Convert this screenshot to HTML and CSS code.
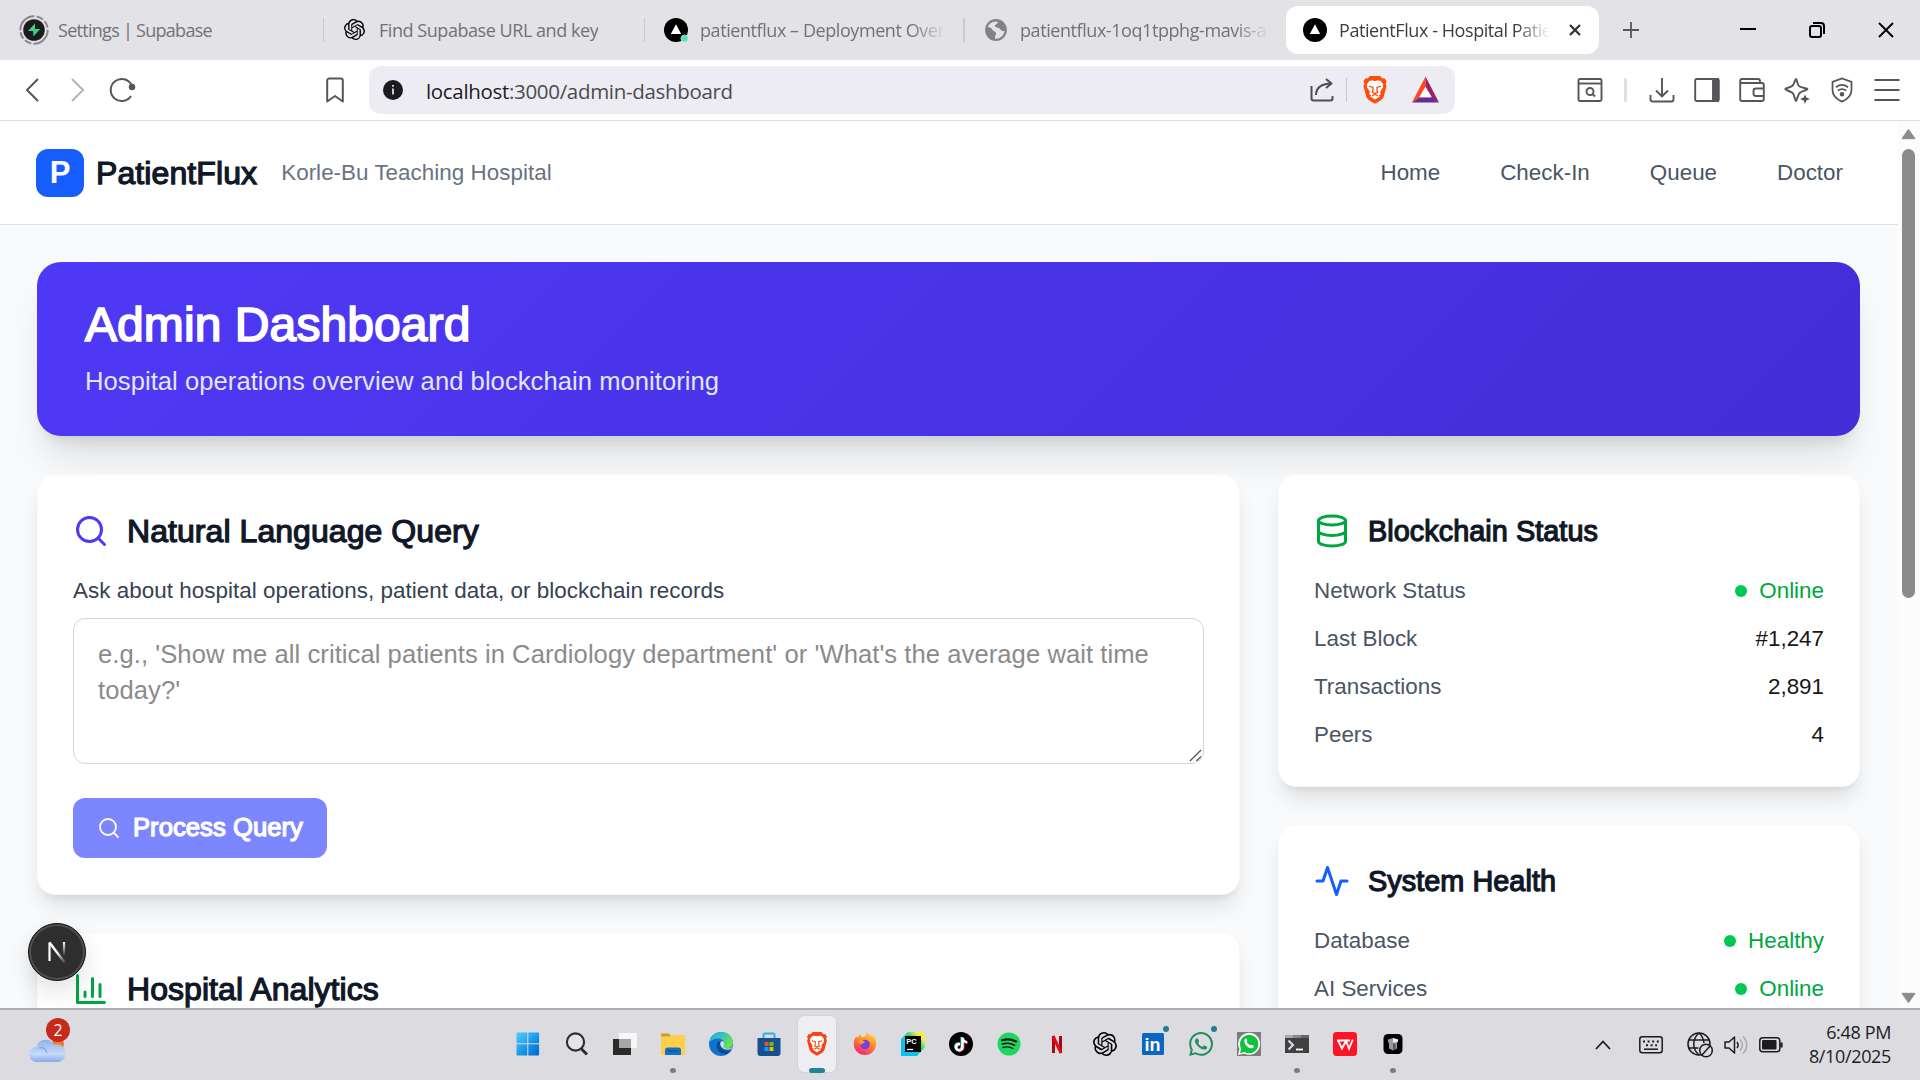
FILE: index.html
```html
<!DOCTYPE html>
<html lang="en">
<head>
<meta charset="utf-8">
<title>PatientFlux - Hospital Patient Management</title>
<link rel="stylesheet" href="styles.css">
</head>
<body>
<svg class="defs" width="0" height="0" aria-hidden="true">
  <defs>
    <symbol id="openai" viewBox="0 0 24 24"><path d="M22.2819 9.8211a5.9847 5.9847 0 0 0-.5157-4.9108 6.0462 6.0462 0 0 0-6.5098-2.9A6.0651 6.0651 0 0 0 4.9807 4.1818a5.9847 5.9847 0 0 0-3.9977 2.9 6.0462 6.0462 0 0 0 .7427 7.0966 5.98 5.98 0 0 0 .511 4.9107 6.051 6.051 0 0 0 6.5146 2.9001A5.9847 5.9847 0 0 0 13.2599 24a6.0557 6.0557 0 0 0 5.7718-4.2058 5.9894 5.9894 0 0 0 3.9977-2.9001 6.0557 6.0557 0 0 0-.7475-7.0729zm-9.022 12.6081a4.4755 4.4755 0 0 1-2.8764-1.0408l.1419-.0804 4.7783-2.7582a.7948.7948 0 0 0 .3927-.6813v-6.7369l2.02 1.1686a.071.071 0 0 1 .038.052v5.5826a4.504 4.504 0 0 1-4.4945 4.4944zm-9.6607-4.1254a4.4708 4.4708 0 0 1-.5346-3.0137l.142.0852 4.783 2.7582a.7712.7712 0 0 0 .7806 0l5.8428-3.3685v2.3324a.0804.0804 0 0 1-.0332.0615L9.74 19.9502a4.4992 4.4992 0 0 1-6.1408-1.6464zM2.3408 7.8956a4.485 4.485 0 0 1 2.3655-1.9728V11.6a.7664.7664 0 0 0 .3879.6765l5.8144 3.3543-2.0201 1.1685a.0757.0757 0 0 1-.071 0l-4.8303-2.7865A4.504 4.504 0 0 1 2.3408 7.872zm16.5963 3.8558L13.1038 8.364 15.1192 7.2a.0757.0757 0 0 1 .071 0l4.8303 2.7913a4.4944 4.4944 0 0 1-.6765 8.1042v-5.6772a.79.79 0 0 0-.407-.667zm2.0107-3.0231l-.142-.0852-4.7735-2.7818a.7759.7759 0 0 0-.7854 0L9.409 9.2297V6.8974a.0662.0662 0 0 1 .0284-.0615l4.8303-2.7866a4.4992 4.4992 0 0 1 6.6802 4.66zM8.3065 12.863l-2.02-1.1638a.0804.0804 0 0 1-.038-.0567V6.0742a4.4992 4.4992 0 0 1 7.3757-3.4537l-.142.0805L8.704 5.459a.7948.7948 0 0 0-.3927.6813zm1.0976-2.3654l2.602-1.4998 2.6069 1.4998v2.9994l-2.5974 1.4997-2.6067-1.4997Z"/></symbol>
    <symbol id="whatsapp" viewBox="0 0 24 24"><path d="M17.472 14.382c-.297-.149-1.758-.867-2.03-.967-.273-.099-.471-.148-.67.15-.197.297-.767.966-.94 1.164-.173.199-.347.223-.644.075-.297-.15-1.255-.463-2.39-1.475-.883-.788-1.48-1.761-1.653-2.059-.173-.297-.018-.458.13-.606.134-.133.298-.347.446-.52.149-.174.198-.298.298-.497.099-.198.05-.371-.025-.52-.075-.149-.669-1.612-.916-2.207-.242-.579-.487-.5-.669-.51-.173-.008-.371-.01-.57-.01-.198 0-.52.074-.792.372-.272.297-1.04 1.016-1.04 2.479 0 1.462 1.065 2.875 1.213 3.074.149.198 2.096 3.2 5.077 4.487.709.306 1.262.489 1.694.625.712.227 1.36.195 1.871.118.571-.085 1.758-.719 2.006-1.413.248-.694.248-1.289.173-1.413-.074-.124-.272-.198-.57-.347m-5.421 7.403h-.004a9.87 9.87 0 01-5.031-1.378l-.361-.214-3.741.982.998-3.648-.235-.374a9.86 9.86 0 01-1.51-5.26c.001-5.45 4.436-9.884 9.888-9.884 2.64 0 5.122 1.03 6.988 2.898a9.825 9.825 0 012.893 6.994c-.003 5.45-4.437 9.884-9.885 9.884m8.413-18.297A11.815 11.815 0 0012.05 0C5.495 0 .16 5.335.157 11.892c0 2.096.547 4.142 1.588 5.945L.057 24l6.305-1.654a11.882 11.882 0 005.683 1.448h.005c6.554 0 11.89-5.335 11.893-11.893a11.821 11.821 0 00-3.48-8.413z"/></symbol>
    <symbol id="tiktok" viewBox="0 0 24 24"><path d="M12.525.02c1.31-.02 2.61-.01 3.91-.02.08 1.53.63 3.09 1.75 4.17 1.12 1.11 2.7 1.62 4.24 1.79v4.03c-1.44-.05-2.89-.35-4.2-.97-.57-.26-1.1-.59-1.62-.93-.01 2.92.01 5.84-.02 8.75-.08 1.4-.54 2.79-1.35 3.94-1.31 1.92-3.58 3.17-5.91 3.21-1.43.08-2.86-.31-4.08-1.03-2.02-1.19-3.44-3.37-3.65-5.71-.02-.5-.03-1-.01-1.49.18-1.9 1.12-3.72 2.58-4.96 1.66-1.44 3.98-2.13 6.15-1.72.02 1.48-.04 2.96-.04 4.44-.99-.32-2.15-.23-3.02.37-.63.41-1.11 1.04-1.36 1.75-.21.51-.15 1.07-.14 1.61.24 1.64 1.82 3.02 3.5 2.87 1.12-.01 2.19-.66 2.77-1.61.19-.33.4-.67.41-1.06.1-1.79.06-3.57.07-5.36.01-4.03-.01-8.05.02-12.07z"/></symbol>
    <symbol id="brave" viewBox="0 0 24 28">
      <path d="M7 0h10l2.600 2.600 2-.3 2 3.200-.9 2.500.8 2.600-3 11.800-2.400 2.800L12 29l-6.100-3.800-2.400-2.800-3-11.800.8-2.600-.9-2.500 2-3.200 2 .3z" transform="scale(1 .96)"/>
      <path fill="#fff" d="M12 5l2.500-.6 2.800.3 3 3.600-.6 1.200.6 1.600-3.200 4.700.7 2.200-2 1.400 1 1.200L12 23.500l-4.800-2.900 1-1.200-2-1.400.7-2.200-3.200-4.700.6-1.600-.6-1.200 3-3.600 2.800-.3z"/>
      <path fill="none" stroke="#fb4a14" stroke-width="1.300" d="M6 10.300l4 .9v3.300l-.8 1.700 2.800 1.400 2.800-1.400-.8-1.700v-3.300l4-.9M9 20l3-1.700 3 1.700"/>
    </symbol>
    <symbol id="vercel" viewBox="0 0 24 24"><circle cx="12" cy="12" r="12" fill="#000"/><path d="M12 6.200l5.200 9.800H6.800z" fill="#fff"/></symbol>
    <symbol id="search" viewBox="0 0 24 24"><circle cx="11" cy="11" r="8"/><path d="M21 21l-4.300-4.300"/></symbol>
  </defs>
</svg>

<div class="tabstrip">
  <div class="tab tab-1">
    <svg class="fav-supabase" viewBox="0 0 30 30"><circle cx="15" cy="15" r="13.700" fill="none" stroke="#88898c" stroke-width="2" stroke-dasharray="22 2.200 7 2.200 7 2.200"/><circle cx="15" cy="15" r="10.800" fill="#1c1c1c"/><path d="M16 8.500l-7 7.500h5.300v5.500l7-7.500H16z" fill="#3ecf8e"/></svg>
    <span class="tab-title t1">Settings | Supabase</span>
  </div>
  <div class="tab tab-2">
    <svg class="fav"><use href="#openai"/></svg>
    <span class="tab-title t2">Find Supabase URL and key</span>
  </div>
  <div class="tab tab-3">
    <svg class="fav24" viewBox="0 0 24 24"><circle cx="12" cy="12" r="12"/><path d="M12 6.200l5.200 9.800H6.800z" fill="#fff"/><circle cx="20.500" cy="20.500" r="3.600" fill="#50e3c2" stroke="#e3e2e7" stroke-width=".6"/></svg>
    <span class="tab-title t3 fade">patientflux – Deployment Overview</span>
  </div>
  <div class="tab tab-4">
    <svg class="fav22" viewBox="0 0 22 22"><circle cx="11" cy="11" r="9.800" fill="#e3e2e7" stroke="#828282" stroke-width="2.200"/><path d="M2 8c3 0 5 1 5.500 3 .5 1.500 3 1 3.500 3s-1 2-1 4v2.500C5 20 1 16 1 11zM10 2l3 1c0 2-3 2-3 4s4 1 5 3 4 3 6 1c0-5-4-9.500-9-10z" fill="#828282"/></svg>
    <span class="tab-title t4 fade">patientflux-1oq1tpphg-mavis-a</span>
  </div>
  <div class="tab tab-active">
    <svg class="fav24"><use href="#vercel"/></svg>
    <span class="tab-title t5 fade">PatientFlux - Hospital Patient</span>
    <svg class="tab-close" viewBox="0 0 12 12"><path d="M1 1l10 10M11 1L1 11" stroke="#333437" stroke-width="2.300"/></svg>
  </div>
  <svg class="newtab" viewBox="0 0 16 16"><path d="M8 0v16M0 8h16" stroke="#55565a" stroke-width="1.800"/></svg>
  <div class="winbtns">
    <svg viewBox="0 0 16 16"><path d="M0 7h16" stroke="#000" stroke-width="2"/></svg>
    <svg viewBox="0 0 16 16" fill="none" stroke="#000" stroke-width="2"><rect x="1" y="4" width="11" height="11" rx="2"/><path d="M4 1h8a3 3 0 0 1 3 3v8"/></svg>
    <svg viewBox="0 0 16 16"><path d="M1 1l14 14M15 1L1 15" stroke="#000" stroke-width="1.900"/></svg>
  </div>
</div>

<div class="toolbar">
  <div class="navbtns">
    <svg viewBox="0 0 24 24" stroke="#55565a"><path d="M17 1L6 12l11 11"/></svg>
    <svg viewBox="0 0 24 24" stroke="#b4b4ba"><path d="M7 1l11 11L7 23"/></svg>
    <svg viewBox="0 0 26 24" stroke="#55565a"><path d="M22 18A11 11 0 1 1 22.500 7"/><circle cx="23" cy="9" r="2.500" fill="#55565a" stroke-width="1.500"/></svg>
  </div>
  <svg class="bookmark" viewBox="0 0 18 26"><path d="M1.200 24.500V3.500a2 2 0 0 1 2-2h11.600a2 2 0 0 1 2 2v21L9 19z" fill="none" stroke="#55565a" stroke-width="2" stroke-linejoin="round"/></svg>
  <div class="urlbar">
    <svg class="info" viewBox="0 0 20 20"><circle cx="10" cy="10" r="10" fill="#1b1b1f"/><path d="M10 8.500v6M10 5v1.800" stroke="#edecf2" stroke-width="1.700"/></svg>
    <span class="url"><b>localhost</b>:3000/admin-dashboard</span>
    <svg class="share" viewBox="0 0 24 24" fill="none" stroke="#4c4d51" stroke-width="2" stroke-linejoin="round"><path d="M1.500 8v12.500a2 2 0 0 0 2 2h17a2 2 0 0 0 2-2V18M6 17c0-7 4-11 15-11.500M16 1l5.500 4.500L16 10"/></svg>
    <i class="urlsep"></i>
    <svg class="brave-url" fill="#fb4f0a"><use href="#brave"/></svg>
    <svg class="bat" viewBox="0 0 28 28"><path d="M14 0L0 27l8-5.500 6-11z" fill="#ff4724"/><path d="M14 0l14 27-8-5.500-6-11z" fill="#9e1f63"/><path d="M0 27h28l-7-5.500H8z" fill="#662d91"/><path d="M14 10.500l6.500 11h-13z" fill="#fff"/></svg>
  </div>
  <div class="tools">
    <svg viewBox="0 0 26 26"><rect x="1.500" y="2" width="23" height="22" rx="1.500"/><path d="M2 6.500h22"/><circle cx="13" cy="14.500" r="3.500"/><path d="M15.500 17l2.500 2.500"/></svg>
    <i class="toolsep"></i>
    <svg viewBox="0 0 26 26"><path d="M13 1v18M7 13.500l6 6 6-6M1.500 18v4.500a2 2 0 0 0 2 2h19a2 2 0 0 0 2-2V18"/></svg>
    <svg viewBox="0 0 26 26"><rect x="1.200" y="2" width="23.600" height="22" rx="1.500"/><path d="M19 2h5v22h-5z" fill="#55565a"/></svg>
    <svg viewBox="0 0 26 26"><path d="M1.200 4v18a2 2 0 0 0 2 2h19.600a2 2 0 0 0 2-2V8a2 2 0 0 0-2-2H3.200a2 2 0 0 1-2-2 1.800 1.800 0 0 1 2-2H19a2 2 0 0 1 2 2v2"/><path d="M24.800 11.500H17a2.500 2.500 0 0 0-2.500 2.500v2.500A2.500 2.500 0 0 0 17 19h7.800"/></svg>
    <svg viewBox="0 0 26 26"><path d="M12 2c1 0 1.300 5.500 3 7.200S23.500 11 23.500 12s-5 2-7.500 3.700S13 24 12 24s-1.500-6-3.200-7.800S1.200 13 1.200 12s5.500-1.500 7.300-3.200S11 2 12 2z"/><path d="M21 17.500l1.400 3L26 22l-3.600 1.500L21 27l-1.400-3.500L16 22l3.600-1.500z" fill="#55565a" stroke="none"/></svg>
    <svg viewBox="0 0 26 28"><path d="M13 1.500L2.800 5.300v9c0 6 4.500 9.700 10.200 12.200 5.700-2.500 10.200-6.200 10.200-12.200v-9zM6.500 11c4-3 9-3 13 0M8.500 14.500c3-2 6-2 9 0"/><circle cx="13" cy="18.500" r="1.500" fill="#55565a"/></svg>
    <svg viewBox="0 0 26 26"><path d="M.5 3h25M.5 13h25M.5 23h25"/></svg>
  </div>
</div>

<main class="viewport">
  <div class="page">
    <header class="site-header">
      <div class="logo">P</div>
      <div class="brand strong">PatientFlux</div>
      <div class="hospital">Korle-Bu Teaching Hospital</div>
      <nav class="nav"><a>Home</a><a>Check-In</a><a>Queue</a><a>Doctor</a></nav>
    </header>
    <div class="content">
      <section class="banner">
        <h1 class="strong">Admin Dashboard</h1>
        <p>Hospital operations overview and blockchain monitoring</p>
      </section>
      <div class="grid">
        <div class="col">
          <section class="card query">
            <h2 class="strong"><svg class="ico indigo"><use href="#search"/></svg>Natural Language Query</h2>
            <label>Ask about hospital operations, patient data, or blockchain records</label>
            <div class="textarea">e.g., 'Show me all critical patients in Cardiology department' or 'What's the average wait time today?'<svg class="grip" viewBox="0 0 14 14"><path d="M1 13L13 1M8 13l5-5" stroke="#555" stroke-width="1.400"/></svg></div>
            <button class="process"><svg><use href="#search"/></svg><span>Process Query</span></button>
          </section>
          <section class="card analytics">
            <h2 class="strong"><svg class="ico green" viewBox="0 0 24 24"><path d="M3 3v18h18M18 17V9M13 17V5M8 17v-3"/></svg>Hospital Analytics</h2>
          </section>
        </div>
        <div class="col">
          <section class="card side">
            <h3 class="strong"><svg class="ico green" viewBox="0 0 24 24"><ellipse cx="12" cy="5" rx="9" ry="3"/><path d="M3 5v14a9 3 0 0 0 18 0V5M3 12a9 3 0 0 0 18 0"/></svg>Blockchain Status</h3>
            <div class="row"><span>Network Status</span><span class="ok">Online</span></div>
            <div class="row"><span>Last Block</span><span class="val">#1,247</span></div>
            <div class="row"><span>Transactions</span><span class="val">2,891</span></div>
            <div class="row"><span>Peers</span><span class="val">4</span></div>
          </section>
          <section class="card side">
            <h3 class="strong"><svg class="ico blue" viewBox="0 0 24 24"><path d="M22 12h-4l-3 9L9 3l-3 9H2"/></svg>System Health</h3>
            <div class="row"><span>Database</span><span class="ok">Healthy</span></div>
            <div class="row"><span>AI Services</span><span class="ok">Online</span></div>
          </section>
        </div>
      </div>
    </div>
    <div class="devbadge"><svg viewBox="0 0 24 28"><defs><linearGradient id="n1" gradientUnits="userSpaceOnUse" x1="12" y1="14" x2="20" y2="26"><stop offset="0" stop-color="#fff"/><stop offset="1" stop-color="#fff" stop-opacity="0"/></linearGradient><linearGradient id="n2" gradientUnits="userSpaceOnUse" x1="0" y1="4" x2="0" y2="18"><stop offset="0" stop-color="#fff"/><stop offset="1" stop-color="#fff" stop-opacity="0"/></linearGradient></defs><path d="M4.500 23V4.500" stroke="#fff" stroke-width="2.200"/><path d="M4.500 4.500L20 25" stroke="url(#n1)" stroke-width="2.400"/><path d="M19 4v14" stroke="url(#n2)" stroke-width="2.200"/></svg></div>
  </div>
  <div class="scrollbar">
    <svg viewBox="0 0 16 12"><path d="M8 1L15 11H1z" fill="#8b8b8b" stroke="#8b8b8b" stroke-linejoin="round"/></svg>
    <i class="thumb"></i>
    <svg class="down" viewBox="0 0 16 12"><path d="M8 11L15 1H1z" fill="#8b8b8b" stroke="#8b8b8b" stroke-linejoin="round"/></svg>
  </div>
</main>

<footer class="taskbar">
  <div class="weather">
    <svg viewBox="0 0 38 28"><defs><linearGradient id="cl" x1="0" y1="0" x2="0" y2="1"><stop offset="0" stop-color="#8fb0ee"/><stop offset=".65" stop-color="#c6daf8"/><stop offset="1" stop-color="#86a9ea"/></linearGradient></defs><circle cx="29" cy="8" r="6" fill="#f07a1d"/><path d="M8 26a7.500 7.500 0 0 1-.5-15A9.500 9.500 0 0 1 25 8.500 8.500 8.500 0 0 1 30 26z" fill="url(#cl)"/><path d="M10 12a6 6 0 0 1 8 5" fill="none" stroke="#7fa3e6" stroke-width="1.200"/></svg>
    <span class="count">2</span>
  </div>
  <div class="apps">
    <div class="app"><svg viewBox="0 0 24 24"><defs><linearGradient id="w" x1="0" y1="0" x2="1" y2="1"><stop offset="0" stop-color="#4fd0ff"/><stop offset=".6" stop-color="#1391e6"/><stop offset="1" stop-color="#0067c5"/></linearGradient></defs><path d="M.5 1.500a1 1 0 0 1 1-1H11.300v10.800H.5zM12.300.5h9.800a1 1 0 0 1 1 1v9.800H12.300zM.5 12.300h10.800v11.200H1.500a1 1 0 0 1-1-1zM12.300 12.300h10.800v10.200a1 1 0 0 1-1 1h-9.800z" fill="url(#w)"/></svg></div>
    <div class="app"><svg viewBox="0 0 24 24" fill="none" stroke="#2c2c2e"><circle cx="10.500" cy="10" r="8.600" stroke-width="2.100" fill="#e4e4e8"/><path d="M16 16.500l6 6" stroke-width="3"/></svg></div>
    <div class="app"><svg viewBox="0 0 24 24"><path d="M0 7h18v16H0z" fill="#2a2a2a"/><path d="M6 1h18v15H6z" fill="#f7f7f8"/><path d="M6 7h12v9H6z" fill="#a6a6a6"/></svg></div>
    <div class="app dot"><svg viewBox="0 0 24 24"><path d="M0 2.500a1 1 0 0 1 1-1h7l2 3H0z" fill="#dd9a00"/><path d="M0 5h9l2-2h12a1 1 0 0 1 1 1v19H0z" fill="#ffcf4a"/><path d="M4 23v-5a2.500 2.500 0 0 1 2.500-2.500h11A2.500 2.500 0 0 1 20 18v5z" fill="#1172c4"/><path d="M7 19h10" stroke="#0a4d8c" stroke-width="1.300"/></svg></div>
    <div class="app"><svg viewBox="0 0 24 24"><defs><linearGradient id="e1" x1="0" y1="0" x2="1" y2=".4"><stop offset="0" stop-color="#2da4e0"/><stop offset=".5" stop-color="#2fc3c9"/><stop offset="1" stop-color="#6fe04a"/></linearGradient></defs><circle cx="12" cy="12" r="12" fill="#1173c9"/><path d="M0 11C1 4.500 6 0 12 0c7 0 12 5 12 10.500 0 3.500-2.500 6-6 6-2.500 0-4-1-4-2.200 0-1 1-1.300 1-3C15 8.500 12 6.500 9 6.500 4.500 6.500 1 9 0 11z" fill="url(#e1)"/><path d="M9.500 9.500c-2 2-2.500 5-1 8s5 4.500 8 4.500c2 0 4-1.500 6-4-3 1.200-7 1-9.500-1.500-2-2-2.500-4.500-1-6.500-.8-.8-1.700-1-2.500-.5z" fill="#0c4a94"/><path d="M12 9.500c-1.500 2-.5 5 1.500 6.500 3 2 7 2 9 .5l1.200-2c-2 2-4.500 2.200-6.500 2-2-.3-3-1.200-2.700-2.200.5-1 1-2 .5-3.500-.5-1.500-2-2-3-1.300z" fill="#dcdbe0"/></svg></div>
    <div class="app"><svg viewBox="0 0 24 24"><path d="M6.500 6V3a1.500 1.500 0 0 1 1.500-1.500h8A1.500 1.500 0 0 1 17.500 3v3" fill="none" stroke="#28b2ec" stroke-width="2"/><path d="M.5 6h23v15a3 3 0 0 1-3 3h-17a3 3 0 0 1-3-3z" fill="#18508f"/><path d="M7.500 10h4v4h-4z" fill="#f25022"/><path d="M12.500 10h4v4h-4z" fill="#7fba00"/><path d="M7.500 15h4v4h-4z" fill="#00a4ef"/><path d="M12.500 15h4v4h-4z" fill="#ffb900"/></svg></div>
    <div class="app active"><svg fill="#fb4214"><use href="#brave"/></svg></div>
    <div class="app"><svg viewBox="0 0 24 24"><defs><linearGradient id="ff" x1=".8" y1="0" x2=".3" y2="1"><stop offset="0" stop-color="#ffe14a"/><stop offset=".45" stop-color="#ff8a1f"/><stop offset="1" stop-color="#f5207a"/></linearGradient></defs><path d="M14 0c1 2 4 3 5.500 5 .6-.5.500-1.500.3-2.500 2.500 2.500 3.500 6 3.300 9.500C22.800 18.500 18 23 12 23S1 18.500.8 12.500C.7 9.500 1.500 6.500 3.500 4c0 1 .3 1.800 1 2.300C5 4.500 6.500 3 8 2.500 7.800 4 8.500 5 9.500 5.500 12 5 13.500 2.500 14 0z" fill="url(#ff)"/><circle cx="12" cy="12.500" r="4.800" fill="#7a3fe0"/><path d="M5.500 8.500c2-1 5 0 6.500 1.500-1 1.500-3 1-3 2.500-2-.2-3.500-2-3.500-4z" fill="#ff9a2e"/></svg></div>
    <div class="app"><svg viewBox="0 0 24 24"><defs><linearGradient id="pc" x1="0" y1="1" x2="1" y2="0"><stop offset=".35" stop-color="#07c3f2"/><stop offset=".6" stop-color="#21d789"/><stop offset=".8" stop-color="#f8ee3c"/></linearGradient></defs><path d="M7 0h14l3 3v12l-8 9H0V7z" fill="url(#pc)"/><path d="M4 4h16v16H4z"/><text class="pc" x="5.200" y="12.200">PC</text><path d="M6 17.500h6" stroke="#fff" stroke-width="1.300"/></svg></div>
    <div class="app"><svg viewBox="0 0 24 24"><circle cx="12" cy="12" r="12"/><use href="#tiktok" x="4.200" y="4.500" width="14" height="15" fill="#25f4ee"/><use href="#tiktok" x="5.800" y="5.500" width="14" height="15" fill="#fe2c55"/><use href="#tiktok" x="5" y="5" width="14" height="15" fill="#fff"/></svg></div>
    <div class="app"><svg viewBox="0 0 24 24" fill="none" stroke="#151515" stroke-linecap="round"><circle cx="12" cy="12" r="11.500" fill="#1ed760" stroke="none"/><path d="M5 8.300c5-1.500 10-1 14 1.200" stroke-width="2.100"/><path d="M5.500 12c4-1.200 8.500-.8 12 1.200" stroke-width="1.700"/><path d="M6 15.500c3.500-1 7-.7 10 1" stroke-width="1.400"/></svg></div>
    <div class="app"><svg viewBox="0 0 24 24"><path d="M8.500 4v17M15.500 4v17" stroke="#a30b14" stroke-width="3"/><path d="M8 4l8 17" stroke="#e50914" stroke-width="3"/></svg></div>
    <div class="app"><svg><use href="#openai"/></svg></div>
    <div class="app note"><svg viewBox="0 0 24 24"><rect x="1" y="1" width="22" height="22" rx="1.500" fill="#0a66c2"/><text class="li" x="3.400" y="19">in</text></svg></div>
    <div class="app note"><svg fill="#1f8f5f"><use href="#whatsapp"/></svg></div>
    <div class="app"><svg viewBox="0 0 24 24"><path d="M0 0h24v24H0z" fill="#7c7c7c"/><path d="M1 23l1.500-6A11 11 0 1 1 7 21.500z" fill="#fff"/><path d="M3 21.200l1.200-4.500A9.200 9.200 0 1 1 7.500 20z" fill="#10c23f"/><path d="M8 7c2-1.500 2.500 1.500 2 2.500-.5 1 2.500 4 3.800 3.800 1-1.200 3.700.7 3 1.700-1.500 2-4 1.500-6.300-.3C8 12.500 6.500 9.500 8 7z" fill="#fff"/></svg></div>
    <div class="app dot"><svg viewBox="0 0 24 24"><path d="M0 3h24v18H0z" fill="#404040"/><path d="M0 3h8v3H0z" fill="#aaa"/><path d="M8 3h8v3H8z" fill="#888"/><path d="M16 3h8v3h-8z" fill="#666"/><path d="M3.500 8.500l4.500 4.500-4.500 4.500" fill="none" stroke="#d6d6d6" stroke-width="2.200"/><path d="M11 17.500h7" stroke="#fff" stroke-width="1.800"/></svg></div>
    <div class="app"><svg viewBox="0 0 24 24"><rect width="24" height="24" rx="3.500" fill="#ff1426"/><path d="M4 8.500h13M5 8.500L9 16.500l4-7.500 3 7.500 3.800-9" fill="none" stroke="#fff" stroke-width="1.900"/></svg></div>
    <div class="app dot"><svg viewBox="0 0 24 24"><rect x="2.500" y="2" width="19" height="20" rx="4.500" fill="#000"/><path d="M7 7.500L12 6l5 1.500v2.500l-1 1v5.500L12 18.500l-4-2V11l-1-1z" fill="#9a9a9a"/><path d="M12 6l5 1.500v2L12 11z" fill="#ececec"/><path d="M12 11v7.500l2.500-1.300V12z" fill="#555"/></svg></div>
  </div>
  <div class="tray">
    <svg class="chev" viewBox="0 0 16 10"><path d="M1 9l7-7.500L15 9" fill="none" stroke="#1c1c1e" stroke-width="1.800"/></svg>
    <svg class="kbd" viewBox="0 0 24 18" fill="none" stroke="#1c1c1e" stroke-width="1.500"><rect x=".8" y=".8" width="22.400" height="16" rx="2.500"/><path d="M4 5.500h16" stroke-width="2" stroke-dasharray="2 2.600"/><path d="M7 9.200h11" stroke-width="2" stroke-dasharray="2 2.600"/><path d="M5 13.200h14"/></svg>
    <svg class="net" viewBox="0 0 26 26" fill="none" stroke="#1c1c1e" stroke-width="1.500"><circle cx="12" cy="12" r="11"/><path d="M1.500 8h21M1.500 16h10M12 1c-7 6-7 16 0 22M12 1c3 2.500 4.500 6 5 10"/><circle cx="19" cy="18.500" r="6.300" fill="#dcdbe0"/><path d="M15 23l8-9"/></svg>
    <svg class="vol" viewBox="0 0 24 20" fill="none" stroke="#1c1c1e" stroke-width="1.500"><path d="M1 7v6h4l5.500 5V2L5 7z" stroke-linejoin="round"/><path d="M13 7c1.500 2 1.500 4 0 6"/><path d="M16 4.500c3 3.500 3 7.500 0 11M19 1.500c5 5 5 12 0 17" stroke="#aaa"/></svg>
    <svg class="bat2" viewBox="0 0 24 16"><rect x=".8" y=".8" width="20" height="14" rx="3" fill="none" stroke="#1c1c1e" stroke-width="1.500"/><rect x="3" y="3" width="14.500" height="9.600" rx="1" fill="#1c1c1e"/><path d="M22.500 5.500v5" stroke="#1c1c1e" stroke-width="2.200"/></svg>
    <div class="clock"><span>6:48 PM</span><span>8/10/2025</span></div>
  </div>
</footer>
</body>
</html>
```

FILE: styles.css
```css
* { box-sizing: border-box; }
body { margin: 0; width: 1920px; height: 1080px; overflow: hidden; display: flex; flex-direction: column; font-family: "Liberation Sans", Arial, sans-serif; background: #fff; }
svg { display: block; flex: none; overflow: visible; }
.defs { position: absolute; }
h1, h2, h3, p { margin: 0; font-weight: 400; }

/* browser tab strip */
.tabstrip { height: 60px; flex: none; background: #e3e2e7; display: flex; align-items: center; font-family: "Open Sans", "Noto Sans", sans-serif; }
.tab { display: flex; align-items: center; height: 24px; margin-top: -1px; position: relative; }
.tab-1 { width: 324px; padding-left: 19px; border-right: 1px solid #cbcad1; }
.tab-2 { width: 321px; padding-left: 20px; border-right: 1px solid #cbcad1; }
.tab-3 { width: 320px; padding-left: 19px; border-right: 2px solid #cbcad1; }
.tab-4 { width: 321px; padding-left: 20px; }
.tab-active { width: 313px; height: 48px; padding-left: 17px; border-radius: 12px; background: #fff; margin-top: 0; }
.tab-title { font-size: 18px; line-height: 24px; color: #717277; white-space: nowrap; overflow: hidden; }
.fade { -webkit-mask-image: linear-gradient(90deg, #000 calc(100% - 34px), transparent); mask-image: linear-gradient(90deg, #000 calc(100% - 34px), transparent); }
.fav-supabase { width: 30px; height: 30px; margin-right: 9px; }
.fav { width: 21px; height: 21px; margin-right: 14px; }
.fav24 { width: 24px; height: 24px; margin-right: 12px; }
.fav22 { width: 22px; height: 22px; margin-right: 13px; }
.t1 { letter-spacing: -.72px; }
.t2 { letter-spacing: -.45px; }
.t3 { width: 246px; letter-spacing: -.43px; }
.t4 { width: 249px; letter-spacing: -.43px; }
.t5 { width: 211px; color: #3c3d41; letter-spacing: -.43px; }
.tab-close { width: 12px; height: 12px; margin-left: 19px; }
.newtab { width: 16px; height: 16px; margin-left: 24px; }
.winbtns { margin-left: auto; padding-right: 26px; display: flex; gap: 53px; }
.winbtns svg { width: 16px; height: 16px; }

/* browser toolbar */
.toolbar { height: 61px; flex: none; border-bottom: 1px solid #dedee1; background: #fff; display: flex; align-items: center; padding: 0 20px 0 21px; }
.navbtns { display: flex; gap: 20px; fill: none; stroke-width: 2; }
.navbtns svg { width: 24px; height: 24px; }
.navbtns svg:last-child { width: 26px; }
.bookmark { width: 18px; height: 26px; margin-left: 191px; }
.urlbar { width: 1086px; height: 48px; margin-left: 25px; border-radius: 12px; background: #edecf2; display: flex; align-items: center; padding: 0 16px 0 14px; }
.info { width: 20px; height: 20px; margin-right: 23px; }
.url { flex: 1; font: 20.500px/26px "Open Sans", "Noto Sans", sans-serif; letter-spacing: -.32px; color: #4b4b50; padding-top: 1px; }
.url b { font-weight: 400; color: #1b1b1f; }
.share { width: 24px; height: 24px; }
.urlsep { width: 1px; height: 24px; background: #c9c8d0; margin: 0 16px 0 12px; }
.brave-url { width: 24px; height: 28px; margin-right: 25px; }
.bat { width: 27px; height: 28px; }
.tools { margin-left: auto; display: flex; align-items: center; gap: 19px; fill: none; stroke: #55565a; stroke-width: 1.900; }
.tools svg { width: 26px; height: 26px; }
.toolsep { width: 3px; height: 24px; margin: 0 3px 0 2px; background: #e0dfe6; border-radius: 2px; }

/* page viewport */
.viewport { height: 887px; flex: none; display: flex; overflow: hidden; background: #f9fafb; }
.page { width: 1898px; position: relative; overflow: hidden; }
.scrollbar { width: 22px; background: #fcfcfc; display: flex; flex-direction: column; align-items: center; padding: 7px 1px 4px 0; }
.scrollbar svg { width: 15px; height: 12px; }
.thumb { width: 13px; height: 449px; border-radius: 7px; background: #8b8b8b; margin-top: 9px; }
.scrollbar .down { margin-top: auto; }

.strong { -webkit-text-stroke: 1.250px currentColor; letter-spacing: .06px; }
.site-header { height: 104px; background: #fff; border-bottom: 1px solid #e0e2e6; display: flex; align-items: center; padding: 0 55px 0 36px; font-size: 22.400px; }
.logo { width: 48px; height: 48px; border-radius: 12px; background: #155dfc; color: #fff; font-size: 31px; font-weight: 700; line-height: 47px; text-align: center; }
.brand { font-size: 32px; color: #101828; margin-left: 12px; letter-spacing: .1px; padding-top: 1px; }
.hospital { color: #6a7282; margin-left: 24px; letter-spacing: .03px; }
.nav { margin-left: auto; display: flex; gap: 60px; color: #4a5565; }

.content { padding: 37px 38px 0 37px; }
.banner { height: 174px; border-radius: 24px; background: linear-gradient(135deg, #4f39f6, #432dd7); padding: 33px 48px; color: #fff; box-shadow: 0 30px 37px -7px rgba(0,0,0,.1), 0 12px 15px -9px rgba(0,0,0,.12); }
.banner h1 { font-size: 48px; line-height: 60px; -webkit-text-stroke-width: 1.700px; letter-spacing: .08px; }
.banner p { font-size: 25.600px; line-height: 36px; color: #e0e7ff; margin-top: 8px; letter-spacing: .045px; }
.grid { margin-top: 38px; display: grid; grid-template-columns: 1203px 582px; gap: 38px; }
.col { display: flex; flex-direction: column; gap: 37px; }
.card { background: #fff; border: 1px solid #f9f9fa; border-radius: 18px; padding: 35px; box-shadow: 0 15px 22px -4px rgba(0,0,0,.11), 0 6px 9px -6px rgba(0,0,0,.11); }
.card h2, .card h3 { display: flex; align-items: center; gap: 18px; color: #101828; }
.card h2 { font-size: 32px; line-height: 42px; }
.card h3 { font-size: 28.800px; line-height: 42px; }
.ico { width: 36px; height: 36px; fill: none; stroke-width: 2; stroke-linecap: round; stroke-linejoin: round; }
.indigo { stroke: #4f39f6; }
.green { stroke: #00a63e; }
.blue { stroke: #155dfc; }
.query { height: 421px; }
.query label { display: block; margin-top: 21px; font-size: 22.400px; line-height: 36px; color: #364153; letter-spacing: .04px; }
.textarea { position: relative; height: 146px; margin-top: 9px; border: 1px solid #d1d5dc; border-radius: 12px; padding: 17px 24px; font-size: 25.600px; line-height: 36px; color: #8b8b8b; letter-spacing: .06px; }
.grip { position: absolute; right: 1px; bottom: 1px; width: 13px; height: 13px; }
.process { margin-top: 34px; width: 254px; height: 60px; border: 0; border-radius: 12px; background: #7c86ff; color: #fff; font: 25.600px "Liberation Sans", Arial, sans-serif; display: flex; align-items: center; padding: 0 24px; gap: 12px; letter-spacing: .05px; -webkit-text-stroke: 1.250px #fff; white-space: nowrap; }
.process span { padding-bottom: 1px; }
.process svg { width: 24px; height: 24px; fill: none; stroke: #fff; stroke-width: 1.800; stroke-linecap: round; }
.analytics { height: 300px; }
.side { height: 313px; padding-top: 35px; }
.side h3 { margin-bottom: 15px; }
.row { height: 48px; display: flex; align-items: center; justify-content: space-between; font-size: 22.400px; color: #4a5565; }
.val { color: #171717; }
.ok { color: #00a63e; display: flex; align-items: center; gap: 12px; }
.ok::before { content: ""; width: 12px; height: 12px; border-radius: 50%; background: #00c951; }
.devbadge { position: absolute; left: 28px; top: 802px; width: 58px; height: 58px; border-radius: 50%; background: #2e2e2e; border: 1px solid #111; box-shadow: inset 0 0 0 2px #505050, 0 10px 24px rgba(0,0,0,.12); display: flex; align-items: center; justify-content: center; }
.devbadge svg { width: 24px; height: 28px; }

/* taskbar */
.taskbar { height: 72px; flex: none; background: #dcdbe0; border-top: 2px solid #adadb2; display: flex; align-items: center; }
.weather { width: 504px; height: 70px; position: relative; padding: 26px 0 0 29px; }
.weather svg { width: 38px; height: 28px; }
.count { position: absolute; left: 46px; top: 8px; width: 24px; height: 24px; border-radius: 50%; background: #c42b1c; color: #fff; font: 16px/24px "Open Sans", sans-serif; text-align: center; }
.apps { display: flex; }
.app { width: 48px; height: 70px; display: flex; align-items: center; justify-content: center; position: relative; padding-bottom: 2px; }
.app:nth-child(n+2) { left: .5px; }
.app svg { width: 24px; height: 24px; }
.app.dot::after { content: ""; position: absolute; left: 21px; bottom: 7px; width: 6px; height: 5px; border-radius: 3px; background: #7d7d80; }
.app.note::after { content: ""; position: absolute; left: 34px; top: 16px; width: 6px; height: 6px; border-radius: 50%; background: #1f7f93; }
.app.active::before { content: ""; position: absolute; left: 5px; top: 6px; width: 38px; height: 56px; border-radius: 6px; background: #eeedf1; box-shadow: 0 0 0 1px #d3d2d7; }
.app.active::after { content: ""; position: absolute; left: 16px; top: 58px; width: 16px; height: 5px; border-radius: 3px; background: #24839a; }
.app.active svg { position: relative; }
.pc { font: 700 7.500px "Liberation Sans", sans-serif; fill: #fff; }
.li { font: 700 18px "Liberation Sans", sans-serif; fill: #fff; }
.tray { margin-left: auto; padding-right: 29px; display: flex; align-items: center; }
.chev { width: 16px; height: 10px; margin-right: 28px; }
.kbd { width: 24px; height: 18px; margin-right: 24px; }
.net { width: 26px; height: 26px; margin-right: 11px; }
.vol { width: 24px; height: 20px; margin-right: 11px; }
.bat2 { width: 24px; height: 16px; }
.clock { width: 108px; display: flex; flex-direction: column; align-items: flex-end; font: 18px/24px "Open Sans", "Noto Sans", sans-serif; letter-spacing: -.35px; color: #1c1c1e; padding-bottom: 3px; }
```
